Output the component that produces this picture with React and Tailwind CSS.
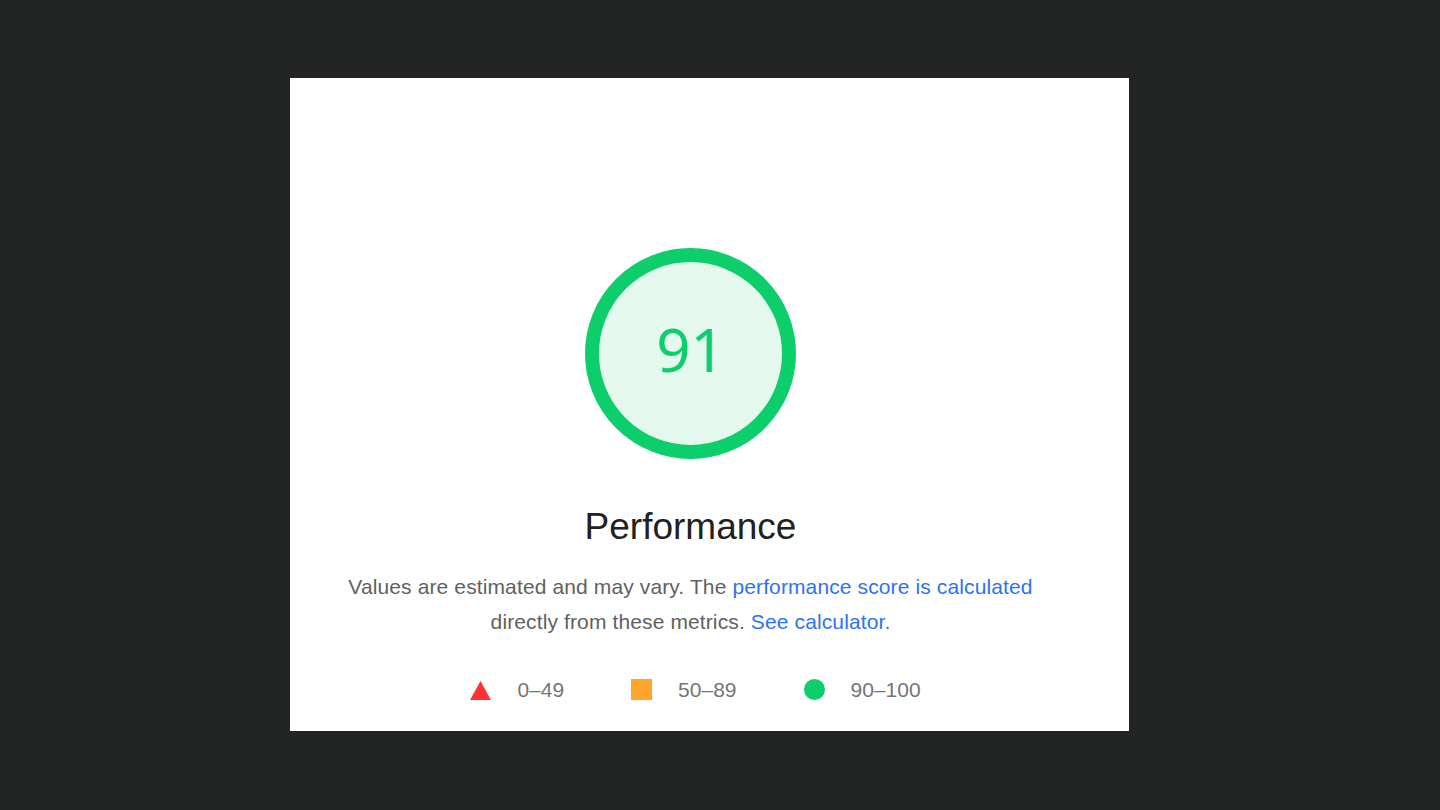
import React from 'react';

const legend = [
  { label: '0–49', shape: 'triangle' },
  { label: '50–89', shape: 'square' },
  { label: '90–100', shape: 'circle' },
];

function LegendIcon({ shape }) {
  if (shape === 'triangle') {
    return (
      <svg width="21" height="20" viewBox="0 0 21 20">
        <polygon points="10.5,1 21,20 0,20" fill="#ff3333" />
      </svg>
    );
  }
  if (shape === 'square') {
    return <span className="block w-[21px] h-[21px] bg-[#ffa62b]" />;
  }
  return <span className="block w-[21px] h-[21px] rounded-full bg-[#0cce6b]" />;
}

export default function App() {
  return (
    <div className="w-full h-[810px] bg-[#232424] flex items-start justify-start pt-[78px] pl-[290px]">
      <div
        className="w-[839px] h-[653px] bg-white flex flex-col items-center pt-[170px] pr-[38px]"
        style={{ fontFamily: '"Liberation Sans", Arial, sans-serif' }}
      >
        {/* score gauge */}
        <div className="w-[211px] h-[211px] shrink-0 rounded-full border-[14px] border-[#0cce6b] bg-[#e5f8ee] flex items-center justify-center">
          <span
            className="text-[60px] leading-none text-[#0cce6b] -mt-[10px]"
            style={{ fontFamily: '"Noto Sans", "Open Sans", sans-serif' }}
          >
            91
          </span>
        </div>

        <h2 className="mt-[48px] text-[37px] leading-[40px] text-[#212121]">Performance</h2>

        <p className="mt-[22px] text-[21px] leading-[35px] tracking-[0.12px] text-[#616161] text-center whitespace-nowrap">
          Values are estimated and may vary. The{' '}
          <a className="text-[#2d72f5]">performance score is calculated</a>
          <br />
          directly from these metrics.{' '}
          <a className="text-[#2d72f5]">See calculator.</a>
        </p>

        <div className="mt-[40px] ml-[10px] flex items-center gap-[67px]">
          {legend.map((item) => (
            <div key={item.label} className="flex items-center gap-[26px]">
              <LegendIcon shape={item.shape} />
              <span className="text-[21px] leading-none text-[#757575]">{item.label}</span>
            </div>
          ))}
        </div>
      </div>
    </div>
  );
}
